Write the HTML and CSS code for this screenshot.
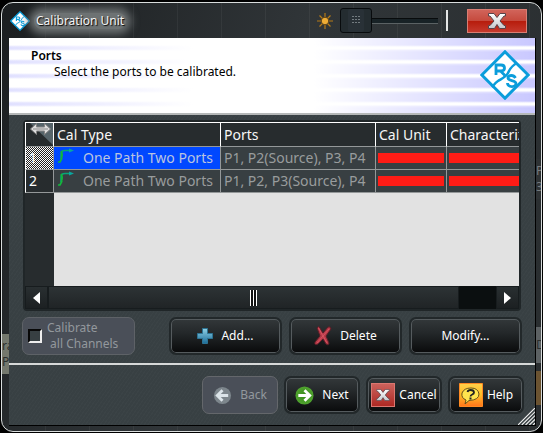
FILE: index.html
```html
<!DOCTYPE html>
<html lang="en">
<head>
<meta charset="utf-8">
<title>Calibration Unit</title>
<link rel="stylesheet" href="styles.css">
</head>
<body>
<svg width="0" height="0" class="defs" aria-hidden="true">
  <defs>
    <linearGradient id="plus" x2="0" y2="1"><stop stop-color="#8fd0e4"/><stop offset="1" stop-color="#1b6c98"/></linearGradient>
    <linearGradient id="metal" x2="0" y2="1"><stop stop-color="#fff"/><stop offset="1" stop-color="#c4c8cc"/></linearGradient>
    <radialGradient id="green"><stop stop-color="#3a8a1c"/><stop offset="1" stop-color="#4fa32e"/></radialGradient>
    <symbol id="logo" viewBox="0 0 50 50">
      <path d="M25 1.800 48.200 25 25 48.200 1.800 25Z" fill="#fff" stroke="#0a9ddb" stroke-width="3"/>
      <path d="M37 13C31 16 30 19 28 23S21 29 18 31 14 35 12 37" fill="none" stroke="#0a9ddb" stroke-width="2.500"/>
      <path d="M16 25V15H21Q24.500 15 24.500 18T21 21H16M20.500 21 25 25.500" fill="none" stroke="#0a9ddb" stroke-width="2.800"/>
      <path d="M35.500 28Q34 25.500 31.500 25.500 28 25.500 28 28C28 31.500 36 29.500 36 33.500 36 36.500 32 37 30 36.200 28 35.500 27.500 33.500 27.500 33" fill="none" stroke="#0a9ddb" stroke-width="2.800"/>
    </symbol>
    <symbol id="path" viewBox="0 0 18 16">
      <path d="M4 11V6Q4 2.500 8 2.500H13" fill="none" stroke="#08a878" stroke-width="1.500"/>
      <path d="M12 0.500 17 2.500 12 4.500Z" fill="#08a8a0"/>
      <path d="M4 3Q6 6 4.500 10M1 14H3L5 10" fill="none" stroke="#12b83c" stroke-width="1.700"/>
    </symbol>
    <symbol id="cross" viewBox="0 0 18 16">
      <path d="M0.500 0.500H6L9 4.500 12 0.500H17.500V3H16L12 8 16 12.500H17.500V15.500H11.500L9 11.500 6.500 15.500H0.500V12.500H2L6 8 2 3H0.500Z" fill="url(#metal)" stroke="#59434a"/>
    </symbol>
  </defs>
</svg>
<main class="window">
  <header class="titlebar">
    <svg class="app"><use href="#logo"/></svg>
    <h1>Calibration Unit</h1>
    <svg class="sun" viewBox="0 0 16 16" aria-hidden="true"><path d="M8 0V16M0 8H16M2.500 2.500 13.500 13.500M13.500 2.500 2.500 13.500" stroke="#b57a16" stroke-width="1.200"/><circle cx="8" cy="8" r="3.800" fill="#efad35" stroke="#57401b"/></svg>
    <input class="opacity" type="range" min="0" max="100" value="0" aria-label="Transparency">
    <i class="divider"></i>
    <button class="close" aria-label="Close"><svg><use href="#cross"/></svg></button>
  </header>
  <div class="content">
    <section class="banner">
      <div><h2>Ports</h2><p>Select the ports to be calibrated.</p></div>
      <svg class="brand" role="img" aria-label="R&amp;S"><use href="#logo"/></svg>
    </section>
    <section class="body">
      <div class="grid">
        <div class="viewport">
          <table>
            <colgroup><col class="c-num"><col class="c-type"><col class="c-ports"><col class="c-unit"><col class="c-char"></colgroup>
            <thead><tr>
              <th class="corner"><svg viewBox="0 0 27 23" aria-hidden="true"><path d="M4 0H27V22Z" fill="#56646a"/><path d="M4.500 6 10.500 .5V4H18.500V.5L24.500 6 18.500 11.500V8H10.500V11.500Z" fill="#dcdcdc" stroke="#858585"/><path d="M7 6H22" stroke="#8a8a8a"/></svg></th>
              <th>Cal Type</th><th>Ports</th><th>Cal Unit</th><th>Characterization</th>
            </tr></thead>
            <tbody>
              <tr class="selected"><th>1</th><td class="type"><svg><use href="#path"/></svg>One Path Two Ports</td><td>P1, P2(Source), P3, P4</td><td class="masked"><i></i></td><td class="masked"><i></i></td></tr>
              <tr><th>2</th><td class="type"><svg><use href="#path"/></svg>One Path Two Ports</td><td>P1, P2, P3(Source), P4</td><td class="masked"><i></i></td><td class="masked"><i></i></td></tr>
            </tbody>
          </table>
        </div>
        <div class="scroll">
          <button aria-label="Scroll left"><svg viewBox="0 0 7 12"><path d="M7 0V12L0 6Z" fill="#fff"/></svg></button>
          <div class="thumb"><i></i></div>
          <div class="rest"></div>
          <button aria-label="Scroll right"><svg viewBox="0 0 7 12"><path d="M0 0V12L7 6Z" fill="#fff"/></svg></button>
        </div>
      </div>
      <div class="actions">
        <label class="check"><input type="checkbox" disabled><span>Calibrate<br>&nbsp;all Channels</span></label>
        <i></i>
        <button class="btn"><svg class="plus" viewBox="0 0 16 16"><path d="M5.500 0.500H10.500V5.500H15.500V10.500H10.500V15.500H5.500V10.500H0.500V5.500H5.500Z" fill="url(#plus)" stroke="#2c7393"/></svg>Add...</button>
        <button class="btn del"><svg viewBox="0 0 18 20"><path d="M3 2Q5 -1 6 2L9 7 14 1Q17 0 17 3L12 10 15 17Q15 20 12 18L9 13 4 18Q0 20 1 16L6 10Z" fill="#b73947" stroke="#541f27"/><path d="M4.500 2 13 17M15 3 3 17" stroke="#d45562"/></svg>Delete</button>
        <button class="btn">Modify...</button>
      </div>
    </section>
    <footer>
      <button class="btn" disabled><svg class="round" viewBox="0 0 20 20"><circle cx="10" cy="10" r="9" fill="#7d868c"/><path d="M16 10H5M10 4.500 4.500 10 10 15.500" fill="none" stroke="#dce4e9" stroke-width="3"/></svg>Back</button>
      <button class="btn"><svg class="round" viewBox="0 0 20 20"><circle cx="10" cy="10" r="9.500" fill="url(#green)"/><path d="M3.500 10H15M10 4.500 15.500 10 10 15.500" fill="none" stroke="#fff" stroke-width="3"/></svg>Next</button>
      <button class="btn cancel"><span class="redbox"><svg viewBox="0 0 18 16"><use href="#cross"/></svg></span>Cancel</button>
      <button class="btn help"><svg class="bubble" viewBox="0 0 24 24"><defs><linearGradient id="orange" x2="0" y2="1"><stop stop-color="#ffd04a"/><stop offset=".5" stop-color="#ffbd27"/><stop offset="1" stop-color="#ff741b"/></linearGradient></defs><path d="M.5.5H23.500V23.500H.5Z" fill="url(#orange)" stroke="#ff8a22"/><path d="M7 17Q2 15 3 10 5 5 12 5T20 11Q20 17 10 17.500L6 21Z" fill="#ffe54e" stroke="#66501b"/><path d="M8.500 9Q9 7 11.500 7 15 7 15 9.500C15 12 11.500 11 11.500 13.500" fill="none" stroke="#222" stroke-width="1.800"/><path d="M10.500 14.500H12.500V16.500H10.500Z" fill="#222"/></svg>Help</button>
      <svg class="grip" viewBox="0 0 18 18" aria-hidden="true"><path d="M0 18 18 0M4 18 18 4M8 18 18 8M12 18 18 12M16 18 18 16" stroke="#f2f2f2" stroke-width="1.200"/></svg>
    </footer>
  </div>
  <div class="scrap left" aria-hidden="true">ra<br>Po</div>
  <div class="scrap dim" aria-hidden="true">P<br>3V</div>
  <div class="scrap right" aria-hidden="true">DI</div>
  <div class="scrap amber" aria-hidden="true"></div>
</main>
</body>
</html>
```

FILE: styles.css
```css
* { box-sizing: border-box; }
body { margin: 0; min-height: 100vh; background: #000; color: #fff; font: 12px/16px "Noto Sans", "Open Sans", sans-serif; display: flex; }
.defs { position: absolute; }
h1, h2, p { margin: 0; font-size: 12px; font-weight: 400; }
button { margin: 0; padding: 0; color: inherit; font: inherit; border: 0; }
svg { display: block; flex: none; }

.window { position: relative; flex: 1; min-width: 0; display: flex; flex-direction: column; margin: 2px 1px 1px; padding: 0 5px 5px 7px; border: 1px solid #d9dddd; border-radius: 12px;
  background: repeating-linear-gradient(90deg, transparent 0 43px, #ffffff0c 43px 44px), linear-gradient(110deg, #1b1e20, #303538 45%, #292d2f); }
.titlebar { display: flex; align-items: center; height: 35px; padding: 0 9px 0 1px; }
.app { width: 20px; height: 20px; }
h1 { margin: 0 auto 0 4px; padding: 0 2px; color: #f4f4f4; text-shadow: 1px 1px 1px #000; border-radius: 8px; background: #6d7273; box-shadow: 0 0 8px 5px #6d7273; }
.sun { width: 16px; height: 16px; }
.opacity { appearance: none; width: 98px; height: 26px; margin: 0 8px 0 7px; background: linear-gradient(#080b0c 1px, #182226 1px 5px, #5b6264 5px) center / 100% 6px no-repeat; }
.opacity::-webkit-slider-thumb { appearance: none; width: 32px; height: 25px; padding: 7px 10px; border: 1px solid #080b0d; border-radius: 3px;
  background: conic-gradient(from 90deg at 1px 1px, transparent 75%, #737b80 0) 0 0 / 3px 3px content-box, #293137; box-shadow: inset 7px 0 #242c30, inset -7px 0 #242c30; }
.divider { width: 2px; height: 21px; margin-right: 19px; background: #e3e5e5; }
.close { display: grid; place-items: center; width: 60px; height: 24px; border: 1px solid #d97e74; background: linear-gradient(#d1645a, #c5493d 50%, #b71c0c 51%, #c5392d); }
.close svg { width: 18px; height: 16px; }

.content { flex: 1; display: flex; flex-direction: column; border: 1px solid #000; border-width: 0 1px 1px 0;
  background: repeating-linear-gradient(125deg, transparent 0 2px, #ffffff04 2px 3px), #384043; }
.banner { display: flex; justify-content: space-between; height: 77px; padding: 10px 5px 0 22px; color: #000; border-bottom: 2px solid #b5b8b8;
  background: linear-gradient(90deg, #fff0, #fff 35%, #fff 58%, #fff0),
    repeating-linear-gradient(#fff 0 7px, #e1e1ff 9px 11px, #fff 13px 14px) left / 45% 100% no-repeat,
    repeating-linear-gradient(#c9c8ff 0 7px, #fff 9px 11px, #dddcff 12px, #c9c8ff 14px); }
h2 { font-weight: 600; }
.banner p { padding-left: 23px; }
.brand { width: 50px; height: 50px; margin-top: 2px; }

.body { flex: 1; padding: 5px 14px 0; }
.grid { border: 2px solid #202628; border-radius: 4px; }
.viewport { height: 164px; overflow: hidden; background: linear-gradient(90deg, #272c2e 29px, #e2e2e2 29px); }
table { width: 100%; min-width: 530px; table-layout: fixed; border-collapse: separate; border-spacing: 0; font-size: 14px; line-height: 20px; color: #989c9d; background: #383f42; }
.c-num { width: 29px; }
.c-type { width: 167px; }
.c-ports { width: 155px; }
.c-unit { width: 71px; }
th, td { height: 23px; padding: 0 2px 0 3px; text-align: left; font-weight: 400; white-space: nowrap; overflow: hidden; border-right: 1px solid #949899; border-bottom: 1px solid #949899; }
thead th { height: 25px; color: #f7f7f7; background: #272c2e; border-top: 1px solid #fff; border-right-color: #fff; }
thead .corner { padding: 0; border-left: 1px solid #fff; }
.corner svg { width: 27px; height: 23px; }
tbody th { color: #fff; background: #272c2e; border-left: 1px solid #fff; }
.selected th { background: repeating-conic-gradient(#fff 0 25%, #222 0 50%) 0 0 / 2px 2px; }
.selected .type { color: #bac4df; background: #0048ff; }
.type svg { display: inline-block; width: 18px; height: 16px; margin-right: 8px; vertical-align: -1px; }
.masked { padding: 0 2px; }
.masked i { display: block; width: 66px; height: 10px; background: #ff1c16; }
.masked:last-child i { width: 70px; }

.scroll { display: flex; height: 23px; background: #0b0f10; }
.scroll button { display: grid; place-items: center; width: 23px; border: 1px solid #171c1e; background: linear-gradient(#292f31, #1c2022); }
.scroll svg { width: 7px; height: 12px; }
.thumb { flex: 1; display: grid; place-items: center; border: 1px solid #171c1e; background: linear-gradient(#2d3335, #202426); }
.thumb i { width: 7px; height: 16px; background: repeating-linear-gradient(90deg, #fff 0 1px, #111 1px 3px); }
.rest { width: 37px; }

.actions { display: grid; grid-template-columns: 113px minmax(18px, 1fr) repeat(3, 113px); gap: 7px; height: 38px; margin: 6px -1px 8px; }
.check { display: flex; align-items: center; gap: 5px; padding-left: 5px; color: #93989d; border: 1px solid #5e6267; border-radius: 7px; background: #4a4f58; }
.check input { appearance: none; width: 14px; height: 14px; margin: 0; background: #373f42; border: 2px solid #eee; border-top-color: #080808; border-left-color: #080808; }
.btn { display: flex; align-items: center; justify-content: center; gap: 8px; height: 38px; border: 2px solid #22282a; border-radius: 7px; color: #fff; background: linear-gradient(#33383a, #24282a 40%, #090a0b); box-shadow: inset 0 0 0 1px #555b5e; }
.btn:disabled { color: #92989d; background: #4a4f58; border: 1px solid #64676b; box-shadow: none; }
.plus { width: 16px; height: 16px; }
.del svg { width: 18px; height: 20px; }

footer { position: relative; display: grid; grid-template-columns: repeat(4, 76px); justify-content: end; gap: 6px; height: 62px; padding: 11px 11px 0; border-top: 2px solid #d6d8d8; }
.round { width: 19px; height: 19px; }
.redbox { display: grid; place-items: center; width: 24px; height: 24px; border: 1px solid #db7770; background: linear-gradient(#cc625c, #ad2924); }
.redbox svg { width: 14px; height: 12px; }
.bubble { width: 24px; height: 24px; }
.cancel, .help { gap: 4px; }
.grip { position: absolute; right: 0; bottom: 0; width: 17px; height: 17px; }

/* Parts of the windows behind, seen through the frame */
.scrap { position: absolute; right: 0; width: 5px; overflow: hidden; color: #2b2f2e; background: #5c6163; }
.left { left: 0; width: 7px; top: 331px; height: 40px; padding-top: 4px; background: #74786d; }
.dim { top: 156px; padding: 4px 0; color: #777b7d; background: #2e3234; }
.right { top: 324px; height: 36px; padding-top: 10px; }
.amber { top: 368px; height: 34px; background: #6b5331; }
```
